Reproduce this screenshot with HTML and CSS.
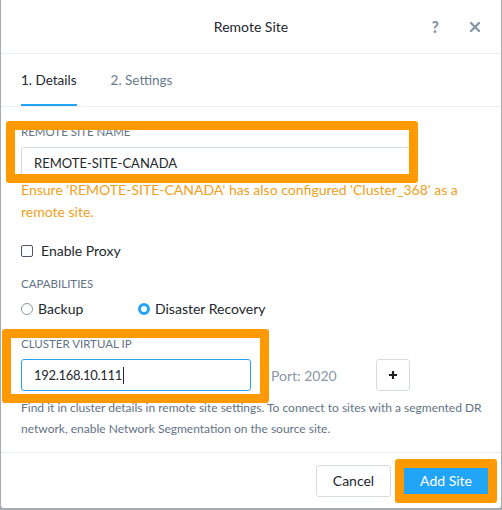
FILE: index.html
```html
<!DOCTYPE html>
<html>
<head>
<meta charset="utf-8">
<link rel="stylesheet" href="styles.css">
</head>
<body>
<div class="modal">
  <div class="header">
    <div class="title">Remote Site</div>
    <div class="header-icons">
      <span class="help">?</span>
      <svg class="close" width="12" height="12" viewBox="0 0 12 12"><path d="M2 2 L10 10 M10 2 L2 10" stroke="#8496a8" stroke-width="2.4" stroke-linecap="round"/></svg>
    </div>
  </div>
  <div class="tabs">
    <div class="tab active">1. Details</div>
    <div class="tab">2. Settings</div>
  </div>
  <div class="body">
    <div class="label">REMOTE SITE NAME</div>
    <div class="input name-input">REMOTE-SITE-CANADA</div>
    <div class="warning">Ensure 'REMOTE-SITE-CANADA' has also configured 'Cluster_368' as a remote site.</div>
    <div class="check-row"><span class="checkbox"></span><span>Enable Proxy</span></div>
    <div class="label caps">CAPABILITIES</div>
    <div class="radio-row">
      <div class="radio-item first"><span class="radio"></span><span>Backup</span></div>
      <div class="radio-item"><span class="radio checked"></span><span>Disaster Recovery</span></div>
    </div>
    <div class="label ip-label">CLUSTER VIRTUAL IP</div>
    <div class="ip-row">
      <div class="input ip-input">192.168.10.111<span class="caret"></span></div>
      <div class="port">Port: 2020</div>
      <div class="plus-btn">
        <svg width="10" height="10" viewBox="0 0 10 10"><path d="M5 1 V9 M1 5 H9" stroke="#1b1f24" stroke-width="2.2"/></svg>
      </div>
    </div>
    <div class="help-text">Find it in cluster details in remote site settings. To connect to sites with a segmented DR network, enable Network Segmentation on the source site.</div>
  </div>
  <div class="footer">
    <div class="btn cancel">Cancel</div>
    <div class="btn primary">Add Site</div>
  </div>
  <div class="mark mark-name"></div>
  <div class="mark mark-ip"></div>
  <div class="mark mark-add"></div>
</div>
</body>
</html>
```
FILE: styles.css
```css
html, body {
  margin: 0;
  padding: 0;
}
body {
  width: 502px;
  height: 510px;
  background: #a4abb3;
  font-family: Lato, "Open Sans", sans-serif;
  color: #22272e;
  overflow: hidden;
}
.modal {
  position: relative;
  box-sizing: border-box;
  margin-left: 1px;
  width: 500px;
  height: 508px;
  background: #fff;
  border-radius: 0 0 3px 3px;
}
.header {
  height: 53px;
  border-bottom: 1px solid #eceef0;
  display: flex;
  align-items: center;
  justify-content: center;
  position: relative;
}
.title {
  font-size: 14px;
  color: #22272e;
}
.header-icons {
  position: absolute;
  right: 20px;
  top: 0;
  height: 53px;
  display: flex;
  align-items: center;
  gap: 30px;
}
.help {
  font-size: 16px;
  font-weight: 900;
  color: #8496a8;
}
.tabs {
  height: 52px;
  border-bottom: 1px solid #eceef0;
  display: flex;
  gap: 34px;
  padding-left: 20px;
}
.tab {
  font-size: 13.5px;
  color: #6a7b8d;
  display: flex;
  align-items: center;
  padding-top: 2px;
  box-sizing: border-box;
  border-bottom: 2px solid transparent;
}
.tab.active {
  color: #22272e;
  border-bottom-color: #22a5f7;
}
.body {
  padding: 0 4px 0 20px;
}
.label {
  font-size: 11.5px;
  line-height: 16px;
  color: #627386;
  margin-top: 17px;
}
.input {
  box-sizing: border-box;
  height: 32px;
  border: 1px solid #d6dbe0;
  border-radius: 3px;
  font-size: 13px;
  padding-left: 12px;
  display: flex;
  align-items: center;
  margin-top: 7px;
}
.name-input {
  width: 389px;
}
.warning {
  font-size: 14px;
  line-height: 22px;
  color: #f0a020;
  margin-top: 0;
  width: 460px;
}
.check-row {
  display: flex;
  align-items: center;
  font-size: 14px;
  line-height: 22px;
  margin-top: 17px;
}
.checkbox {
  box-sizing: border-box;
  width: 12px;
  height: 12px;
  border: 1.5px solid #4b5563;
  border-radius: 2px;
  margin-right: 8px;
}
.label.caps {
  margin-top: 14px;
}
.radio-row {
  display: flex;
  font-size: 14px;
  line-height: 22px;
  margin-top: 6px;
}
.radio-item {
  display: flex;
  align-items: center;
}
.radio-item.first {
  width: 117px;
}
.radio {
  box-sizing: border-box;
  width: 12px;
  height: 12px;
  border: 1px solid #8c97a3;
  border-radius: 50%;
  margin-right: 5px;
}
.radio.checked {
  border: 3.5px solid #22a5f7;
  background: #fff;
}
.label.ip-label {
  margin-top: 16px;
}
.ip-row {
  display: flex;
  align-items: center;
  margin-top: 7px;
}
.ip-input {
  width: 230px;
  margin-top: 0;
  border-color: #22a5f7;
  letter-spacing: -0.3px;
}
.caret {
  display: inline-block;
  width: 1px;
  height: 17px;
  background: #22272e;
  margin-left: 1px;
}
.port {
  font-size: 14px;
  color: #8a97a5;
  margin-left: 20px;
  width: 105px;
}
.plus-btn {
  box-sizing: border-box;
  width: 34px;
  height: 32px;
  border: 1px solid #d6dbe0;
  border-radius: 3px;
  display: flex;
  align-items: center;
  justify-content: center;
}
.help-text {
  font-size: 12px;
  line-height: 21px;
  color: #627386;
  margin-top: 6px;
}
.footer {
  position: absolute;
  left: 0;
  right: 0;
  bottom: 0;
  height: 55px;
  border-top: 1px solid #eceef0;
  display: flex;
  justify-content: flex-end;
  align-items: center;
  gap: 9px;
  padding-right: 9px;
}
.btn {
  box-sizing: border-box;
  height: 32px;
  border-radius: 3px;
  font-size: 14px;
  display: flex;
  align-items: center;
  justify-content: center;
}
.cancel {
  width: 75px;
  border: 1px solid #d6dbe0;
  color: #22272e;
}
.primary {
  width: 92px;
  background: #22a5f7;
  color: #fff;
}
.mark {
  position: absolute;
  box-sizing: border-box;
  border: 9px solid #ff9900;
  border-radius: 3px;
}
.mark-name {
  left: 5px;
  top: 121px;
  width: 412px;
  height: 62px;
}
.mark-ip {
  left: 1px;
  top: 329px;
  width: 267px;
  height: 74px;
}
.mark-add {
  left: 394px;
  top: 459px;
  width: 102px;
  height: 44px;
}
```
